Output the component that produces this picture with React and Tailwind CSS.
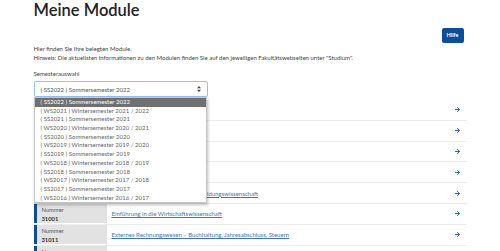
import React from 'react';
import { ArrowRight } from 'lucide-react';

const semesters = [
  '( SS2022 ) Sommersemester 2022',
  '( WS2021 ) Wintersemester 2021 / 2022',
  '( SS2021 ) Sommersemester 2021',
  '( WS2020 ) Wintersemester 2020 / 2021',
  '( SS2020 ) Sommersemester 2020',
  '( WS2019 ) Wintersemester 2019 / 2020',
  '( SS2019 ) Sommersemester 2019',
  '( WS2018 ) Wintersemester 2018 / 2019',
  '( SS2018 ) Sommersemester 2018',
  '( WS2017 ) Wintersemester 2017 / 2018',
  '( SS2017 ) Sommersemester 2017',
  '( WS2016 ) Wintersemester 2016 / 2017',
];

const modules = [
  { nr: '31021', name: 'Grundlagen der Mikroökonomie' },
  { nr: '31031', name: 'Statistik und Datenanalyse' },
  { nr: '33021', name: 'Einführung in die Psychologie' },
  { nr: '33031', name: 'Lehren und Lernen in Unternehmen' },
  { nr: '33011', name: 'Einführung in die Erziehungs- und Bildungswissenschaft' },
  { nr: '31001', name: 'Einführung in die Wirtschaftswissenschaft' },
  { nr: '31011', name: 'Externes Rechnungswesen – Buchhaltung, Jahresabschluss, Steuern' },
  { nr: '31041', name: 'Mathematische Grundlagen' },
];

const ModuleRow = ({ mod }) => (
  <div className="flex h-[20.8px] border-b border-[#ececec]">
    <div className="mb-[1px] flex w-[73px] shrink-0">
      <div className="w-[3px] bg-[#0b4d96]" />
      <div className="flex-1 bg-[#e2e2e2] pl-[5px] pt-[1.5px] leading-[9px]">
        <div className="text-[5.8px] text-[#555]">Nummer</div>
        <div className="text-[5.8px] font-bold text-[#333]">{mod.nr}</div>
      </div>
    </div>
    <div className="flex flex-1 items-center pl-[5px] pr-[6px]">
      <a href="#" className="flex-1 text-[6px] text-[#3a76bf] underline">
        {mod.name}
      </a>
      <ArrowRight size={7} strokeWidth={3.2} className="text-[#1d5aa6]" />
    </div>
  </div>
);

export default function App() {
  return (
    <div className="h-[251px] overflow-hidden bg-white font-['Lato',sans-serif]">
      <div className="mx-auto w-[433px]">
        <h1 className="text-[16.5px] font-semibold leading-[20px] text-[#222]">Meine Module</h1>

        <div className="mt-[8px] flex justify-end pr-[3px]">
          <button className="h-[15px] w-[22px] rounded-[2px] bg-[#0b4f9c] text-[5.5px] font-bold text-white">
            Hilfe
          </button>
        </div>

        <div className="mt-[2px] text-[6px] leading-[8.5px] text-[#444]">
          <p>Hier finden Sie Ihre belegten Module.</p>
          <p>
            Hinweis: Die aktuellsten Informationen zu den Modulen finden Sie auf den jeweiligen
            Fakultätswebseiten unter "Studium".
          </p>
        </div>

        <div className="mt-[8px] text-[6px] leading-[8px] text-[#444]">Semesterauswahl</div>

        {/* Select with opened list */}
        <div className="relative mt-[3px] w-[174px]">
          <div className="flex h-[16px] items-center justify-between rounded-[2px] border border-[#8fc3f5] pl-[6px] pr-[6px] text-[6px] text-[#555]">
            <span>{semesters[0]}</span>
            <svg width="4" height="6" viewBox="0 0 4 6">
              <path d="M2 0 L4 2.3 L0 2.3 Z M2 6 L4 3.7 L0 3.7 Z" fill="#444" />
            </svg>
          </div>

          <div className="absolute left-0 top-full z-10 w-[173px] border border-[#c6c6c6] bg-white shadow-[1px_2px_3px_rgba(0,0,0,0.25)]">
            {semesters.map((s, i) => (
              <div
                key={s}
                className={`h-[8.7px] pl-[6px] text-[6px] leading-[8.7px] ${
                  i === 0 ? 'bg-[#707070] text-white' : 'text-[#666]'
                }`}
              >
                {s}
              </div>
            ))}
          </div>
        </div>

        {/* Module list */}
        <div className="mt-[3px]">
          {modules.map((m) => (
            <ModuleRow key={m.nr} mod={m} />
          ))}
        </div>
      </div>
    </div>
  );
}
